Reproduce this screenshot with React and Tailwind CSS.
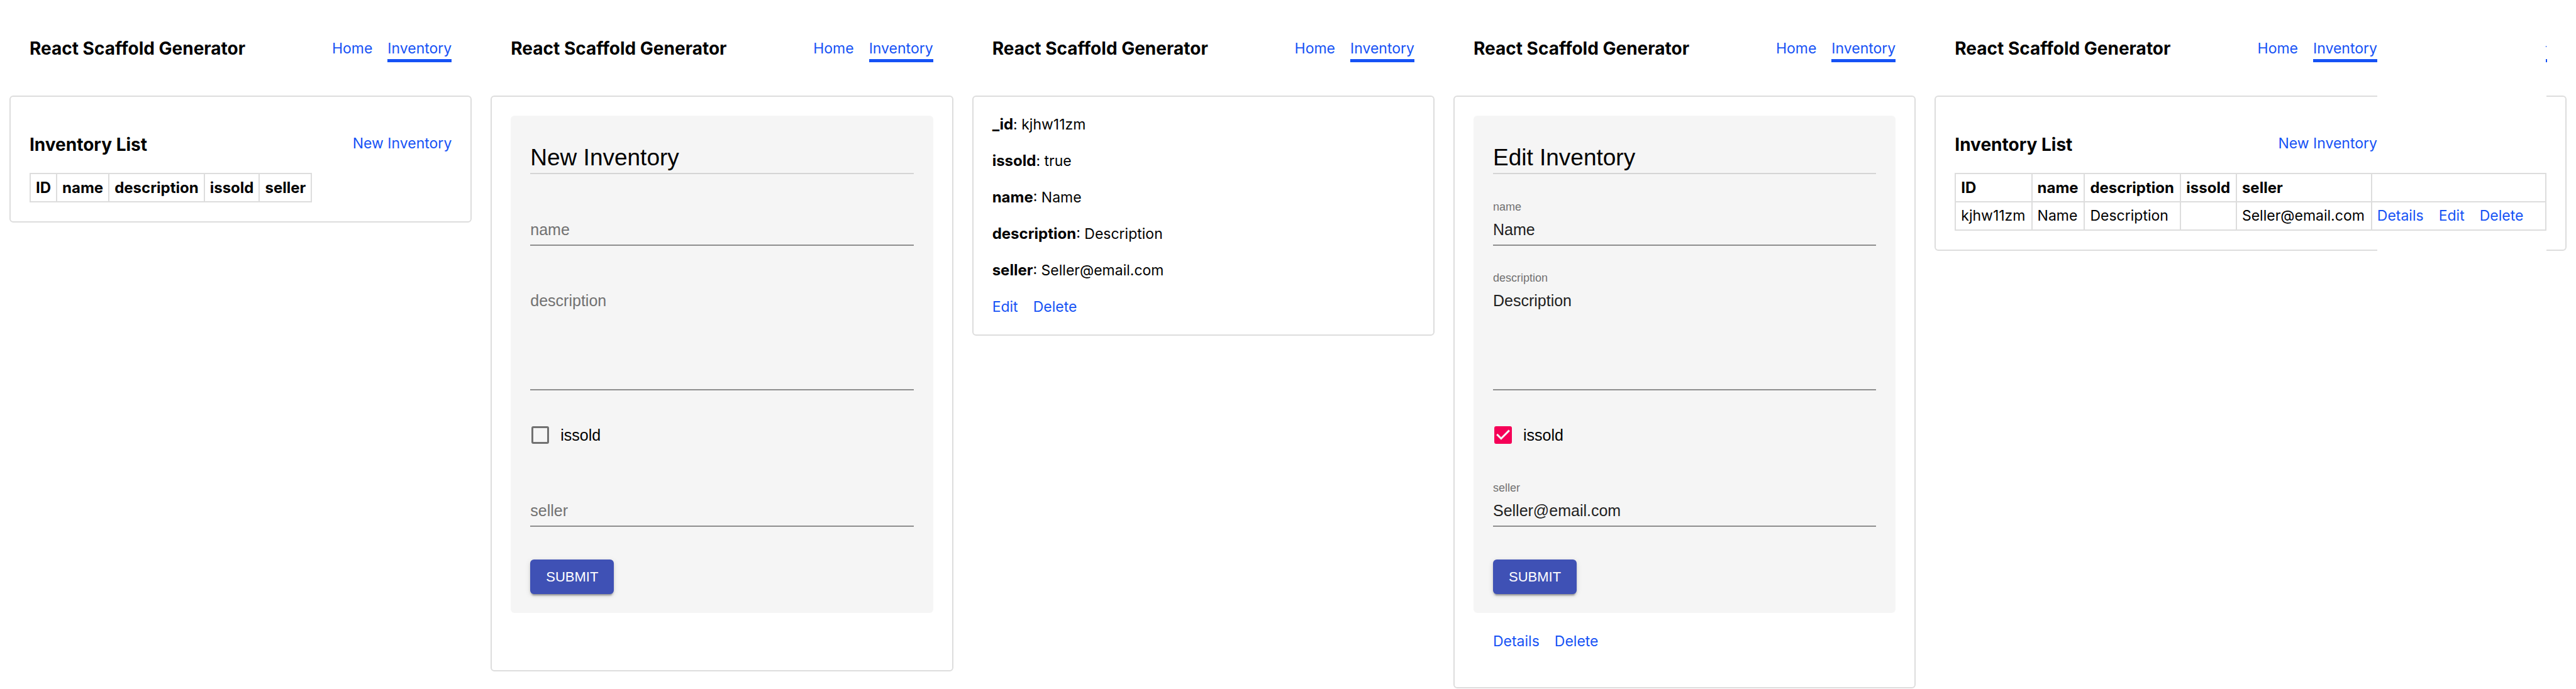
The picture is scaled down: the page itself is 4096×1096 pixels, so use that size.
import React, { useId } from "react";

const link = "text-[#1652f5]";

function Header({ className = "px-[47px]", children }) {
  return (
    <header className={`relative flex items-start justify-between whitespace-nowrap pt-[60px] pb-[53px] ${className}`}>
      <h1 className="text-[28px] leading-[34px] font-bold">React Scaffold Generator</h1>
      <nav className={`mt-[2px] flex gap-[24px] ${link}`}>
        <a href="#home">Home</a>
        <a href="#inventory" className="border-b-[5px] border-[#1652f5] pb-[2px]">
          Inventory
        </a>
      </nav>
      {children}
    </header>
  );
}

function Card({ children }) {
  return (
    <main className="relative mx-[15px] rounded-[6px] border-2 border-[#dddddd] p-[30px]">{children}</main>
  );
}

function ListTitle({ className = "" }) {
  return (
    <div className={`flex items-start justify-between whitespace-nowrap pt-[29px] pb-[28px] ${className}`}>
      <h2 className="text-[28px] leading-[34px] font-bold">Inventory List</h2>
      <a href="#new" className={link}>
        New Inventory
      </a>
    </div>
  );
}

const cell = "border-2 border-[#dddddd] px-[8px] py-[7px] text-left leading-[29px] whitespace-nowrap";

function Th({ children }) {
  return (
    <th scope="col" className={`${cell} text-[24px] font-bold`}>
      {children}
    </th>
  );
}

function Field({ label, value, multiline, className = "" }) {
  const id = useId();
  const Tag = multiline ? "textarea" : "input";
  const filled = value !== undefined;
  return (
    <div className={className}>
      <div className="h-[32px] text-[18px] leading-[22px] text-[#717171]">
        {filled && (
          <label htmlFor={id} className="block">
            {label}
          </label>
        )}
      </div>
      <Tag
        id={id}
        rows={multiline ? 5 : undefined}
        type={multiline ? undefined : "text"}
        aria-label={filled ? undefined : label}
        placeholder={filled ? undefined : label}
        defaultValue={value}
        className={`block w-full resize-none border-b-2 border-[#8e8e8e] bg-transparent text-[25px] leading-[30px] text-[#212121] outline-none placeholder:text-[#717171] placeholder:opacity-100 ${
          multiline ? "pb-[6px]" : "h-[41px] pb-[9px]"
        }`}
      />
    </div>
  );
}

function Checkbox({ label, checked }) {
  return (
    <label className="mt-[56px] flex w-fit items-center gap-[18px] pl-[2px] text-[25px] leading-[30px]">
      <span className="relative block size-[28px]">
        <input
          type="checkbox"
          defaultChecked={checked}
          className="peer block size-[28px] appearance-none rounded-[3px] border-3 border-[#717171] checked:border-[#f50057] checked:bg-[#f50057]"
        />
        <svg
          viewBox="3 3 18 18"
          className="pointer-events-none absolute inset-0 hidden size-[28px] text-[#f5f5f5] peer-checked:block"
          fill="currentColor"
          aria-hidden="true"
        >
          <path d="M10 17l-5-5 1.41-1.41L10 14.17l7.59-7.59L19 8l-9 9z" />
        </svg>
      </span>
      {label}
    </label>
  );
}

function InventoryForm({ title, item = {} }) {
  return (
    <form
      onSubmit={(e) => e.preventDefault()}
      className="rounded-[6px] bg-[#f5f5f5] px-[31px] pt-[45px] pb-[30px] font-['Liberation_Sans',Arial,sans-serif]"
    >
      <h2 className="border-b-2 border-[#d5d5d5] pb-[2px] text-[37px] leading-[44px]">{title}</h2>
      <Field label="name" value={item.name} className="mt-[41px]" />
      <Field label="description" value={item.description} multiline className="mt-[40px]" />
      <Checkbox label="issold" checked={Boolean(item.issold)} />
      <Field label="seller" value={item.seller} className="mt-[58px]" />
      <button
        type="submit"
        className="mt-[52px] block h-[55px] rounded-[6px] bg-[#3f51b5] px-[25px] text-[22px] leading-[30px] text-white shadow-[0_5px_2px_-3px_rgba(0,0,0,0.2),0_3px_3px_0_rgba(0,0,0,0.14),0_2px_8px_0_rgba(0,0,0,0.12)]"
      >
        SUBMIT
      </button>
    </form>
  );
}

const record = {
  _id: "kjhw11zm",
  issold: true,
  name: "Name",
  description: "Description",
  seller: "Seller@email.com",
};

export default function App() {
  return (
    <div className="grid grid-cols-[1000fr_1000fr_1000fr_1000fr_1352fr] items-start bg-white font-[Inter,sans-serif] text-[23px] leading-[30px] text-black">
      <section className="min-w-0">
        <Header />
        <Card>
          <ListTitle />
          <table className="border-collapse">
            <thead>
              <tr>
                <Th>ID</Th>
                <Th>name</Th>
                <Th>description</Th>
                <Th>issold</Th>
                <Th>seller</Th>
              </tr>
            </thead>
          </table>
        </Card>
      </section>

      <section className="min-w-0">
        <Header />
        <Card>
          <div className="pb-[61px]">
            <InventoryForm title="New Inventory" />
          </div>
        </Card>
      </section>

      <section className="min-w-0">
        <Header />
        <Card>
          <div className="flex flex-col gap-[30px] leading-[28px]">
            {Object.entries(record).map(([key, value]) => (
              <p key={key}>
                <strong className="text-[24px] font-bold">{key}</strong>: {String(value)}
              </p>
            ))}
            <div className={`flex gap-[24px] ${link}`}>
              <a href="#edit">Edit</a>
              <a href="#delete">Delete</a>
            </div>
          </div>
        </Card>
      </section>

      <section className="min-w-0">
        <Header />
        <Card>
          <InventoryForm title="Edit Inventory" item={record} />
          <div className={`flex gap-[24px] px-[31px] pt-[30px] pb-[28px] ${link}`}>
            <a href="#details">Details</a>
            <a href="#delete">Delete</a>
          </div>
        </Card>
      </section>

      <section className="min-w-0">
        <Header className="pl-[47px] pr-[316px]">
          <span className="absolute top-[94px] right-[46px] h-[5px] w-[2px] bg-[#1652f5]" />
          <span className="absolute top-[73px] right-[47px] h-[2px] w-px bg-[#1652f5]" />
        </Header>
        <Card>
          <span className="absolute -top-[2px] right-[30px] h-[2px] w-[269px] bg-white" />
          <span className="absolute -bottom-[2px] right-[30px] h-[2px] w-[269px] bg-white" />
          <ListTitle className="pr-[269px]" />
          <table className="w-full border-collapse">
            <thead>
              <tr>
                <Th>ID</Th>
                <Th>name</Th>
                <Th>description</Th>
                <Th>issold</Th>
                <Th>seller</Th>
                <td className={cell} />
              </tr>
            </thead>
            <tbody>
              <tr>
                <td className={cell}>{record._id}</td>
                <td className={cell}>{record.name}</td>
                <td className={cell}>{record.description}</td>
                <td className={cell} />
                <td className={cell}>{record.seller}</td>
                <td className={cell}>
                  <div className={`flex gap-[24px] pr-[24px] ${link}`}>
                    <a href="#details">Details</a>
                    <a href="#edit">Edit</a>
                    <a href="#delete">Delete</a>
                  </div>
                </td>
              </tr>
            </tbody>
          </table>
        </Card>
      </section>
    </div>
  );
}
